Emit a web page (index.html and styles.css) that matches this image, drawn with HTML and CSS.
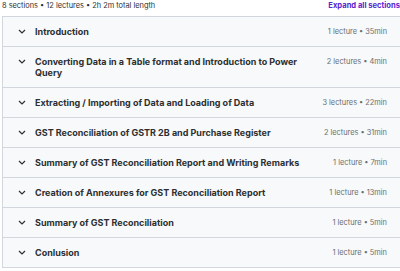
FILE: index.html
```html
<!doctype html>
<html lang="en">
    <head>
        <meta charset="UTF-8" />
        <title>Course content</title>
        <link rel="stylesheet" href="styles.css">
    </head>
    <body>
        <div class="summary">
            <span>8 sections • 12 lectures • 2h 2m total length</span>
            <span class="expand">Expand all sections</span>
        </div>
        <div class="sections">
            <div class="section">
                <svg class="chev" viewBox="0 0 8 5"><path d="M1 1l3 3 3-3" /></svg>
                <div class="title">Introduction</div>
                <div class="meta">1 lecture • 35min</div>
            </div>
            <div class="section">
                <svg class="chev" viewBox="0 0 8 5"><path d="M1 1l3 3 3-3" /></svg>
                <div class="title">Converting Data in a Table format and Introduction to Power Query</div>
                <div class="meta">2 lectures • 4min</div>
            </div>
            <div class="section">
                <svg class="chev" viewBox="0 0 8 5"><path d="M1 1l3 3 3-3" /></svg>
                <div class="title">Extracting / Importing of Data and Loading of Data</div>
                <div class="meta">3 lectures • 22min</div>
            </div>
            <div class="section">
                <svg class="chev" viewBox="0 0 8 5"><path d="M1 1l3 3 3-3" /></svg>
                <div class="title">GST Reconciliation of GSTR 2B and Purchase Register</div>
                <div class="meta">2 lectures • 31min</div>
            </div>
            <div class="section">
                <svg class="chev" viewBox="0 0 8 5"><path d="M1 1l3 3 3-3" /></svg>
                <div class="title">Summary of GST Reconciliation Report and Writing Remarks</div>
                <div class="meta">1 lecture • 7min</div>
            </div>
            <div class="section">
                <svg class="chev" viewBox="0 0 8 5"><path d="M1 1l3 3 3-3" /></svg>
                <div class="title">Creation of Annexures for GST Reconciliation Report</div>
                <div class="meta">1 lecture • 13min</div>
            </div>
            <div class="section">
                <svg class="chev" viewBox="0 0 8 5"><path d="M1 1l3 3 3-3" /></svg>
                <div class="title">Summary of GST Reconciliation</div>
                <div class="meta">1 lecture • 5min</div>
            </div>
            <div class="section">
                <svg class="chev" viewBox="0 0 8 5"><path d="M1 1l3 3 3-3" /></svg>
                <div class="title">Conlusion</div>
                <div class="meta">1 lecture • 5min</div>
            </div>
        </div>
    </body>
</html>
```

FILE: styles.css
```css
body {
    margin: 0;
    padding: 0 0 0 2px;
    font-family: Inter, "Noto Sans", sans-serif;
    color: #2d2f31;
    background: #fff;
    overflow: hidden;
    width: 400px;
}

.summary {
    display: flex;
    justify-content: space-between;
    align-items: center;
    height: 16px;
    font-size: 7.4px;
    color: #2d2f31;
    margin-top: -3px;
    padding-right: 2px;
}

.expand {
    color: #5624d0;
    font-weight: 700;
    font-size: 7.6px;
}

.sections {
    width: 402px;
    border: 1px solid #d1d7dc;
    border-right: none;
    margin-top: 3px;
}

.section {
    display: flex;
    align-items: flex-start;
    padding: 9px 18px 9px 15px;
    background: #f7f9fa;
    border-top: 1px solid #d1d7dc;
    line-height: 11px;
}

.section:first-child {
    border-top: none;
}

.chev {
    width: 8px;
    height: 5px;
    margin-top: 3px;
    flex: none;
    fill: none;
    stroke: #2d2f31;
    stroke-width: 1.2;
}

.title {
    flex: 1;
    margin-left: 9px;
    font-size: 9px;
    font-weight: 700;
    padding-right: 24px;
}

.meta {
    flex: none;
    font-size: 7.4px;
    color: #6a6f73;
}
```
